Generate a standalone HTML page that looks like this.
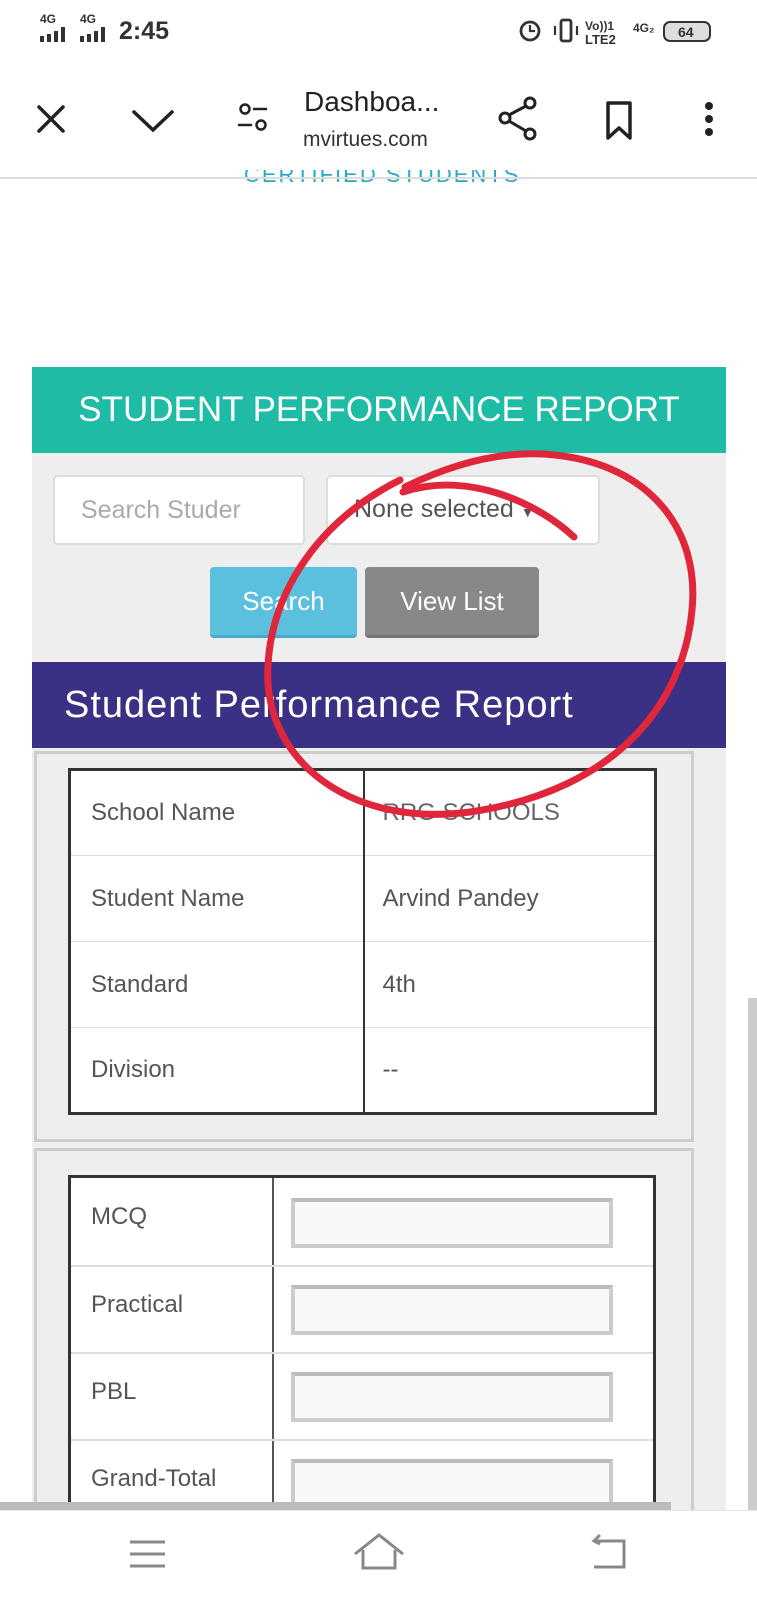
<!DOCTYPE html>
<html><head><meta charset="utf-8"><style>
*{box-sizing:border-box;margin:0;padding:0}
body{width:757px;height:1600px;position:relative;background:#fff;font-family:"Liberation Sans",sans-serif;overflow:hidden;color:#555}
.a{position:absolute}
.tb td{border-bottom:1px solid #ddd}
</style></head><body>
<!-- status bar -->
<div class="a" style="left:40px;top:12px;font-size:12px;font-weight:bold;color:#333">4G</div>
<div class="a" style="left:80px;top:12px;font-size:12px;font-weight:bold;color:#333">4G</div>
<svg class="a" style="left:40px;top:27px" width="80" height="16"><g fill="#333"><rect x="0" y="9" width="4" height="6"/><rect x="7" y="7" width="4" height="8"/><rect x="14" y="4" width="4" height="11"/><rect x="21" y="0" width="4" height="15"/><rect x="40" y="9" width="4" height="6"/><rect x="47" y="7" width="4" height="8"/><rect x="54" y="4" width="4" height="11"/><rect x="61" y="0" width="4" height="15"/></g></svg>
<div class="a" style="left:119px;top:17px;font-size:25px;font-weight:bold;color:#333">2:45</div>
<svg class="a" style="left:518px;top:16px" width="200" height="32"><circle cx="12" cy="15" r="9" fill="none" stroke="#333" stroke-width="2.8"/><path d="M12 9v6h5" stroke="#333" stroke-width="2.2" fill="none"/><rect x="43" y="4" width="10" height="21" rx="2" fill="none" stroke="#333" stroke-width="2.8"/><path d="M37 10v9M59 10v9" stroke="#333" stroke-width="2.2"/><text x="67" y="14" font-size="12" font-weight="bold" fill="#333" font-family="Liberation Sans">Vo))1</text><text x="67" y="28" font-size="13" font-weight="bold" fill="#333" font-family="Liberation Sans">LTE2</text><text x="115" y="16" font-size="12" font-weight="bold" fill="#333" font-family="Liberation Sans">4G₂</text><rect x="146" y="6" width="46" height="19" rx="6" fill="#ddd" stroke="#333" stroke-width="2"/><text x="160" y="21" font-size="14" font-weight="bold" fill="#333" font-family="Liberation Sans">64</text></svg>
<!-- toolbar -->
<svg class="a" style="left:0;top:90px" width="757" height="60"><g stroke="#222" stroke-width="3.5" fill="none" stroke-linecap="round"><path d="M39 17l24 24M63 17L39 41"/><path d="M134 22l19 18 19-18"/><circle cx="245" cy="19" r="4.5" stroke-width="2.5"/><path d="M254 19h12M239 35h12" stroke-width="2.5"/><circle cx="261" cy="35" r="4.5" stroke-width="2.5"/><circle cx="530" cy="13" r="5" stroke-width="3"/><circle cx="505" cy="28" r="5" stroke-width="3"/><circle cx="530" cy="44" r="5" stroke-width="3"/><path d="M509 25l17-9M509 31l17 10" stroke-width="3"/><path d="M608 13h22v35l-11-10-11 10z" stroke-width="3.5" stroke-linejoin="round"/></g><g fill="#222"><circle cx="709" cy="16" r="4"/><circle cx="709" cy="29" r="4"/><circle cx="709" cy="42" r="4"/></g></svg>
<div class="a" style="left:304px;top:86px;font-size:28px;color:#222">Dashboa...</div>
<div class="a" style="left:303px;top:128px;font-size:21px;color:#333">mvirtues.com</div>
<div class="a" style="left:244px;top:170px;width:280px;height:13px;overflow:hidden"><div style="position:absolute;top:-8px;left:0;font-size:22px;color:#2aa8c8;letter-spacing:2px;white-space:nowrap">CERTIFIED STUDENTS</div></div>
<div class="a" style="left:0;top:177px;width:757px;height:2px;background:#ddd"></div>
<!-- panel -->
<div class="a" style="left:32px;top:367px;width:694px;height:86px;background:#1ebba5;color:#fff;font-size:35px;text-align:center;line-height:86px">STUDENT PERFORMANCE REPORT</div>
<div class="a" style="left:32px;top:453px;width:694px;height:1057px;background:#eee"></div>
<div class="a" style="left:53px;top:475px;width:252px;height:70px;background:#fff;border:2px solid #ddd;border-radius:5px;font-size:25px;color:#aaa;line-height:66px;padding-left:26px;white-space:nowrap;overflow:hidden">Search Studer</div>
<div class="a" style="left:326px;top:475px;width:274px;height:70px;background:#fff;border:2px solid #ddd;border-radius:5px;font-size:25px;color:#555;line-height:64px;padding-left:26px">None selected <span style="font-size:14px">▼</span></div>
<div class="a" style="left:210px;top:567px;width:147px;height:71px;background:#5bc0de;border-radius:4px;border-bottom:3px solid #46a9c8;color:#fff;font-size:26px;text-align:center;line-height:68px">Search</div>
<div class="a" style="left:365px;top:567px;width:174px;height:71px;background:#888;border-radius:4px;border-bottom:3px solid #777;color:#fff;font-size:26px;text-align:center;line-height:68px">View List</div>
<div class="a" style="left:32px;top:662px;width:694px;height:86px;background:#3a3185;color:#fff;font-size:38px;line-height:86px;padding-left:32px;letter-spacing:1px">Student Performance Report</div>
<!-- card 1 -->
<div class="a" style="left:34px;top:751px;width:660px;height:391px;border:3px solid #ccc;background:#eee"></div>
<table class="a tb" style="left:68px;top:768px;width:589px;border:3px solid #333;border-collapse:collapse;background:#fff;font-size:24px;color:#555">
<tr style="height:86px"><td style="width:294px;padding-left:20px;border-right:2px solid #333">School Name</td><td style="padding-left:18px;color:#666">RRG SCHOOLS</td></tr>
<tr style="height:86px"><td style="padding-left:20px;border-right:2px solid #333">Student Name</td><td style="padding-left:18px">Arvind Pandey</td></tr>
<tr style="height:86px"><td style="padding-left:20px;border-right:2px solid #333">Standard</td><td style="padding-left:18px">4th</td></tr>
<tr style="height:86px"><td style="padding-left:20px;border-right:2px solid #333">Division</td><td style="padding-left:18px">--</td></tr>
</table>
<!-- card 2 -->
<div class="a" style="left:34px;top:1148px;width:660px;height:400px;border:3px solid #ccc;border-bottom:none;background:#eee"></div>
<div class="a" style="left:68px;top:1175px;width:588px;height:340px;background:#fff;border-left:3px solid #333;border-right:3px solid #333;border-top:3px solid #333"></div>
<div class="a" style="left:272px;top:1178px;width:2px;height:340px;background:#555"></div>
<div class="a" style="left:71px;top:1265px;width:582px;height:2px;background:#ddd"></div>
<div class="a" style="left:71px;top:1352px;width:582px;height:2px;background:#ddd"></div>
<div class="a" style="left:71px;top:1439px;width:582px;height:2px;background:#ddd"></div>
<div class="a" style="left:91px;top:1203px;font-size:24px">MCQ</div>
<div class="a" style="left:91px;top:1291px;font-size:24px">Practical</div>
<div class="a" style="left:91px;top:1378px;font-size:24px">PBL</div>
<div class="a" style="left:91px;top:1465px;font-size:24px">Grand-Total</div>
<div class="a" style="left:291px;top:1198px;width:322px;height:50px;border:4px solid #ccc;border-top-color:#bbb;background:#f8f8f8"></div>
<div class="a" style="left:291px;top:1285px;width:322px;height:50px;border:4px solid #ccc;border-top-color:#bbb;background:#f8f8f8"></div>
<div class="a" style="left:291px;top:1372px;width:322px;height:50px;border:4px solid #ccc;border-top-color:#bbb;background:#f8f8f8"></div>
<div class="a" style="left:291px;top:1459px;width:322px;height:50px;border:4px solid #ccc;border-top-color:#bbb;background:#f8f8f8"></div>
<div class="a" style="left:0;top:1502px;width:671px;height:8px;background:#bbb"></div>
<div class="a" style="left:748px;top:998px;width:9px;height:512px;background:#ccc"></div>
<!-- bottom nav -->
<div class="a" style="left:0;top:1510px;width:757px;height:90px;background:#fff;border-top:1px solid #e5e5e5"></div>
<svg class="a" style="left:0;top:1520px" width="757" height="60"><g stroke="#888" stroke-width="3" fill="none"><path d="M130 22h35M130 34h35M130 46h35"/><path d="M355 34l24-19 24 19M363 30v18h32V30"/><path d="M594 21h30v26h-30"/><path d="M600 15l-6 6 6 3"/></g></svg>
<!-- red annotation -->
<svg class="a" style="left:0;top:0" width="757" height="1600"><g stroke="#e0263a" stroke-width="7" fill="none" stroke-linecap="round"><path d="M405,487 C460,460 510,450 555,455 C650,465 700,530 692,610 C684,700 620,790 470,812 C350,828 262,760 268,665 C272,590 320,520 400,480"/><path d="M403,492 C470,470 540,505 574,537"/></g></svg>
</body></html>
